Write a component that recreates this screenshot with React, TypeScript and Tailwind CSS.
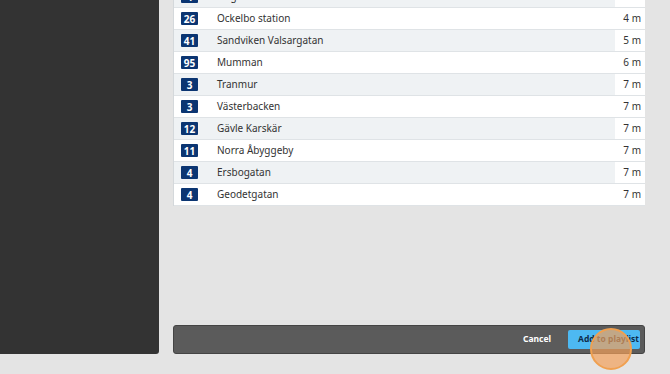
import React from 'react';

interface Stop {
  line: string;
  name: string;
  time: string;
}

const stops: Stop[] = [
  { line: '4', name: 'Högaström', time: '2 m' },
  { line: '26', name: 'Ockelbo station', time: '4 m' },
  { line: '41', name: 'Sandviken Valsargatan', time: '5 m' },
  { line: '95', name: 'Mumman', time: '6 m' },
  { line: '3', name: 'Tranmur', time: '7 m' },
  { line: '3', name: 'Västerbacken', time: '7 m' },
  { line: '12', name: 'Gävle Karskär', time: '7 m' },
  { line: '11', name: 'Norra Åbyggeby', time: '7 m' },
  { line: '4', name: 'Ersbogatan', time: '7 m' },
  { line: '4', name: 'Geodetgatan', time: '7 m' },
];

const StopRow: React.FC<{ stop: Stop; odd: boolean }> = ({ stop, odd }) => (
  <div
    className={`flex h-[22px] items-center border-b border-[#dfe3e6] ${odd ? 'bg-[#eff2f4]' : 'bg-white'}`}
  >
    <div className="flex w-[43px] shrink-0 pl-[7px]">
      <span className="flex h-[13px] w-[17px] items-center justify-center rounded-[1px] bg-[#0b3572] text-[10px] font-bold leading-none text-white">
        {stop.line}
      </span>
    </div>
    <div className="flex-1 text-[10px] text-[#333]">{stop.name}</div>
    <div className="flex h-full w-[30px] items-center justify-end bg-white pr-[4px] text-[10px] text-[#333]">
      {stop.time}
    </div>
  </div>
);

export default function App() {
  return (
    <div
      className="relative flex h-[374px] w-[670px] overflow-hidden bg-[#e4e4e4]"
      style={{ fontFamily: '"Noto Sans", "Open Sans", sans-serif' }}
    >
      <div className="h-[354px] w-[159px] shrink-0 rounded-br-[3px] bg-[#333333]" />

      <div className="flex flex-1 flex-col pl-[14px] pr-[25px]">
        <div className="-mt-[14px] border-l border-[#d4d8db]">
          {stops.map((s, i) => (
            <StopRow key={i} stop={s} odd={i % 2 === 0} />
          ))}
        </div>

        <div className="mt-auto mb-[20px] flex h-[29px] items-center justify-end rounded-[3px] border border-[#444] bg-[#5b5b5b] pr-[4px]">
          <button className="mr-[17px] text-[8.5px] font-bold text-white">Cancel</button>
          <button className="h-[19px] w-[72px] overflow-hidden whitespace-nowrap rounded-[2px] bg-[#4db9f2] pl-[10px] text-left text-[8.5px] font-bold text-[#0d2c4a]">
            Add to playlist
          </button>
        </div>
      </div>

      <div className="pointer-events-none absolute left-[590px] top-[328px] h-[42px] w-[42px] rounded-full border-2 border-[#f0a050] bg-[#f2a05a]/70" />
    </div>
  );
}
